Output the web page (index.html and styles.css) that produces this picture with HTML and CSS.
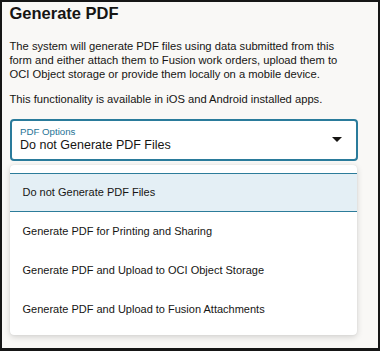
FILE: index.html
```html
<!DOCTYPE html>
<html lang="en">
<head>
<meta charset="utf-8">
<title>Generate PDF</title>
<link rel="stylesheet" href="styles.css">
</head>
<body>
<main class="panel">
  <h1 class="title">Generate PDF</h1>
  <p class="desc">The system will generate PDF files using data submitted from this form and either attach them to Fusion work orders, upload them to OCI Object storage or provide them locally on a mobile device.</p>
  <p class="desc">This functionality is available in iOS and Android installed apps.</p>
  <div class="select">
    <div class="select-text">
      <div class="select-label">PDF Options</div>
      <div class="select-value">Do not Generate PDF Files</div>
    </div>
    <svg class="caret" width="10" height="5" viewBox="0 0 10 5" aria-hidden="true"><path d="M0 0H10L5 5Z" fill="#161513"/></svg>
  </div>
  <ul class="menu">
    <li class="item selected">Do not Generate PDF Files</li>
    <li class="item">Generate PDF for Printing and Sharing</li>
    <li class="item">Generate PDF and Upload to OCI Object Storage</li>
    <li class="item">Generate PDF and Upload to Fusion Attachments</li>
  </ul>
</main>
</body>
</html>
```

FILE: styles.css
```css
* { box-sizing: border-box; }
html, body { margin: 0; padding: 0; }
body {
  width: 380px;
  height: 351px;
  overflow: hidden;
  background: #f9f8f6;
  border-style: solid;
  border-color: #161616;
  border-width: 2px 2px 3px 2px;
  font-family: "Liberation Sans", Arial, sans-serif;
  color: #161513;
}
.panel {
  padding: 0 20px 0 7.5px;
}
.title {
  margin: 0;
  font-size: 16.5px;
  line-height: 22px;
  font-weight: bold;
  color: #161513;
}
.desc {
  margin: 16px 0 0 0;
  font-size: 11.2px;
  line-height: 13.8px;
}
.desc + .desc { margin-top: 11.6px; }
.select {
  margin-top: 12.2px;
  height: 42px;
  border: 2px solid #2a7b9b;
  border-radius: 4px;
  background: #ffffff;
  display: flex;
  align-items: center;
  padding: 0 14px 0 8.5px;
}
.select-text {
  flex: 1;
  align-self: flex-start;
  padding-top: 5px;
}
.select-label {
  font-size: 9.7px;
  line-height: 12.5px;
  color: #1f7396;
}
.select-value {
  font-size: 12.5px;
  line-height: 15.5px;
  color: #161513;
}
.caret { display: block; flex: none; }
.menu {
  list-style: none;
  margin: 4.5px 0 0 0.5px;
  width: 347px;
  padding: 7.5px 0 5.7px 0;
  background: #ffffff;
  border-radius: 4px;
  box-shadow: 0 2px 6px rgba(0, 0, 0, 0.16), 0 0 1px rgba(0, 0, 0, 0.12);
}
.item {
  height: 39px;
  line-height: 37px;
  border-top: 1px solid transparent;
  border-bottom: 1px solid transparent;
  padding-left: 12.5px;
  font-size: 11px;
  color: #161513;
  white-space: nowrap;
}
.item.selected {
  background: #e4eff5;
  border-color: #2c7c9a;
}
```
